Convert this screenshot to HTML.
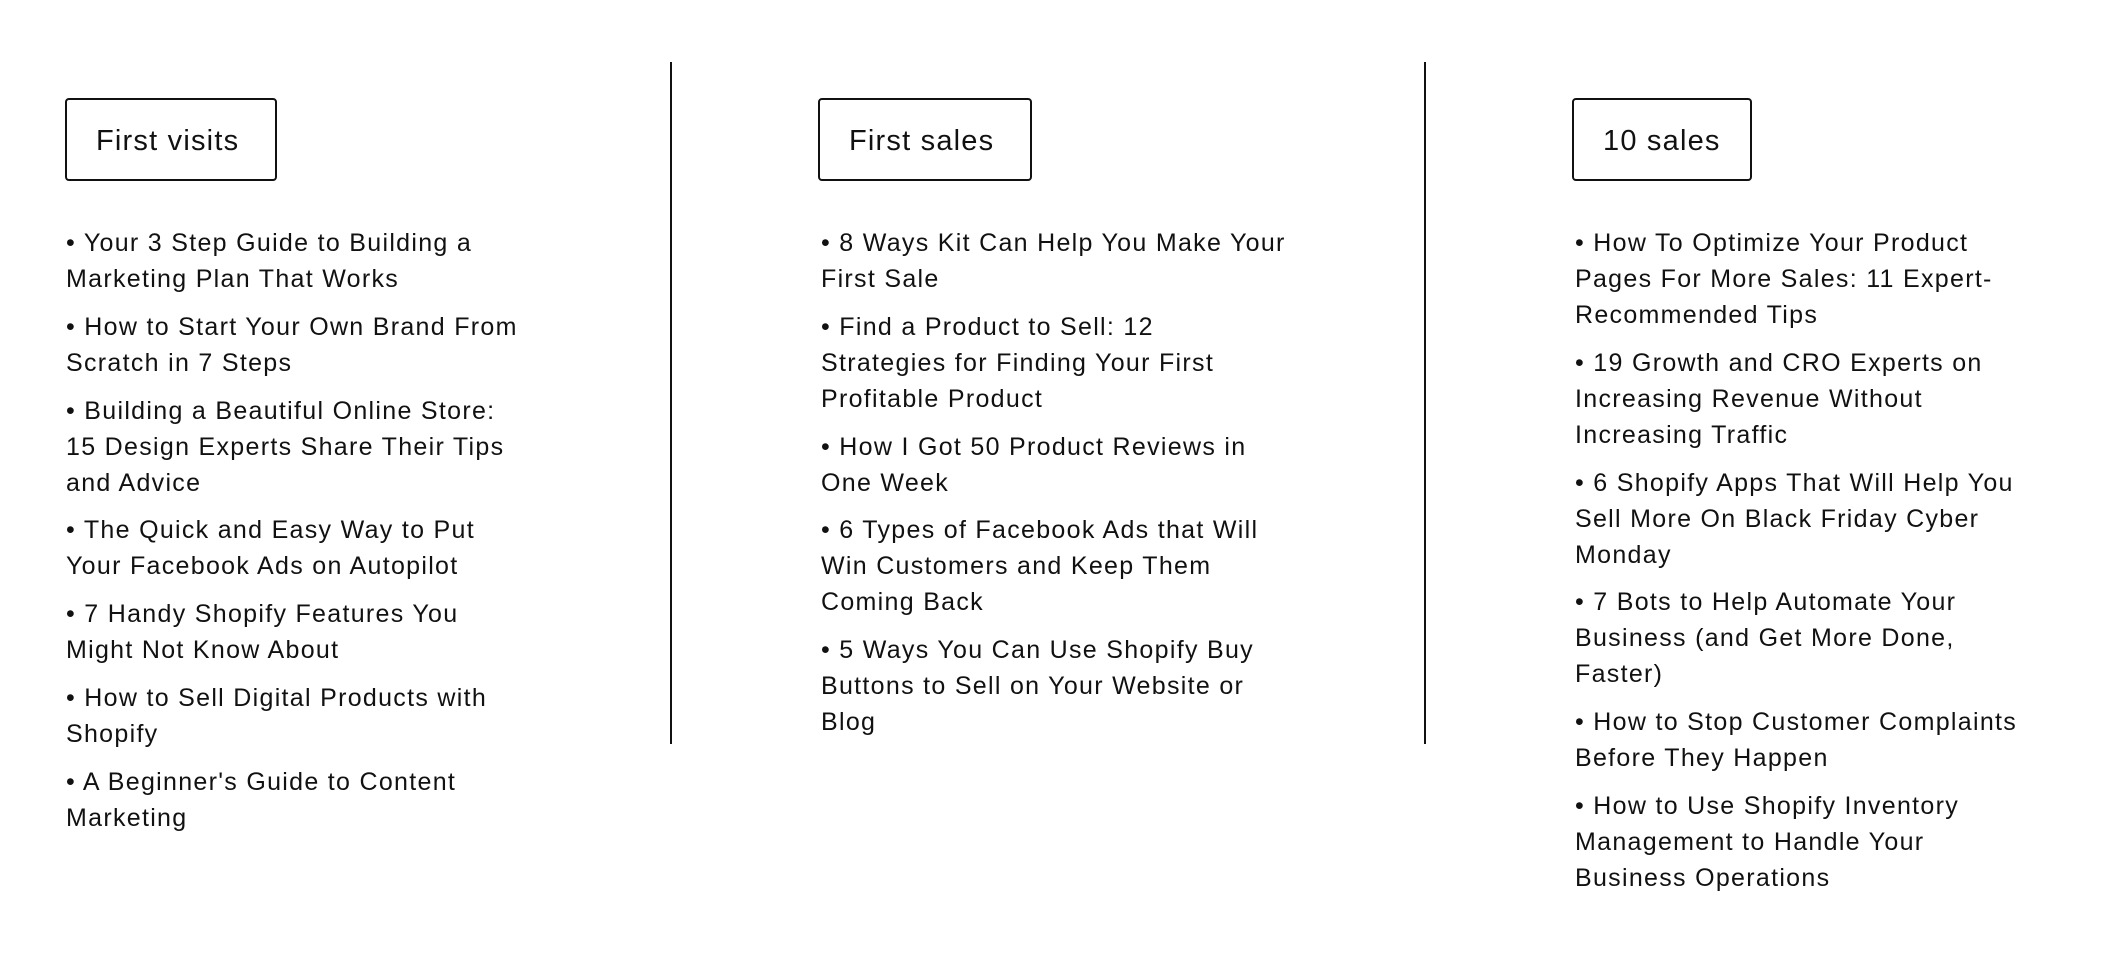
<!DOCTYPE html>
<html><head><meta charset="utf-8"><style>
html,body{margin:0;padding:0;background:#fff;width:2110px;height:962px;overflow:hidden}
body{font-family:"Liberation Sans",sans-serif;color:#111;position:relative}
.div{position:absolute;top:62px;height:682px;width:2px;background:#111}
.box{position:absolute;top:98px;height:83px;border:2px solid #111;border-radius:4px;box-sizing:border-box;font-size:29px;letter-spacing:1.2px;line-height:82px;padding-left:29px}
.col{position:absolute;top:225px;font-size:25px;letter-spacing:1.3px;line-height:36px;white-space:nowrap}
.col div{margin-bottom:11.8px}
</style></head><body>
<div class="div" style="left:670px"></div>
<div class="div" style="left:1424px"></div>
<div class="box" style="left:65px;width:212px">First visits</div>
<div class="box" style="left:818px;width:214px">First sales</div>
<div class="box" style="left:1572px;width:180px">10 sales</div>
<div class="col" style="left:66px">
<div>• Your 3 Step Guide to Building a<br>Marketing Plan That Works</div>
<div>• How to Start Your Own Brand From<br>Scratch in 7 Steps</div>
<div>• Building a Beautiful Online Store:<br>15 Design Experts Share Their Tips<br>and Advice</div>
<div>• The Quick and Easy Way to Put<br>Your Facebook Ads on Autopilot</div>
<div>• 7 Handy Shopify Features You<br>Might Not Know About</div>
<div>• How to Sell Digital Products with<br>Shopify</div>
<div>• A Beginner's Guide to Content<br>Marketing</div>
</div>
<div class="col" style="left:821px">
<div>• 8 Ways Kit Can Help You Make Your<br>First Sale</div>
<div>• Find a Product to Sell: 12<br>Strategies for Finding Your First<br>Profitable Product</div>
<div>• How I Got 50 Product Reviews in<br>One Week</div>
<div>• 6 Types of Facebook Ads that Will<br>Win Customers and Keep Them<br>Coming Back</div>
<div>• 5 Ways You Can Use Shopify Buy<br>Buttons to Sell on Your Website or<br>Blog</div>
</div>
<div class="col" style="left:1575px">
<div>• How To Optimize Your Product<br>Pages For More Sales: 11 Expert-<br>Recommended Tips</div>
<div>• 19 Growth and CRO Experts on<br>Increasing Revenue Without<br>Increasing Traffic</div>
<div>• 6 Shopify Apps That Will Help You<br>Sell More On Black Friday Cyber<br>Monday</div>
<div>• 7 Bots to Help Automate Your<br>Business (and Get More Done,<br>Faster)</div>
<div>• How to Stop Customer Complaints<br>Before They Happen</div>
<div>• How to Use Shopify Inventory<br>Management to Handle Your<br>Business Operations</div>
</div>
</body></html>
